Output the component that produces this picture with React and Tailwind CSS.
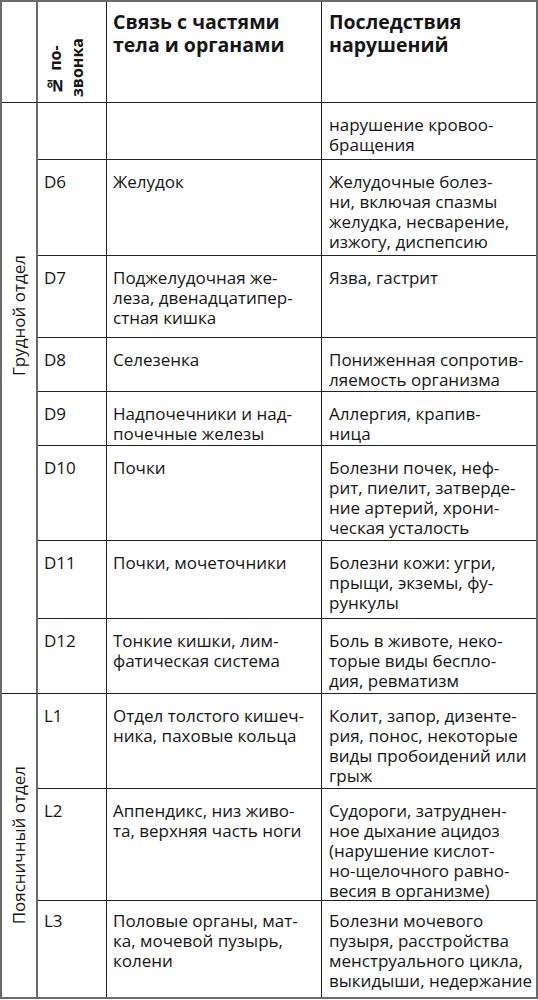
import React from "react";

const rows = [
  { h: "h-[57px]", num: "", organ: [], effect: ["нарушение кровоо-", "бращения"] },
  { h: "h-[96px]", num: "D6", organ: ["Желудок"], effect: ["Желудочные болез-", "ни, включая спазмы", "желудка, несварение,", "изжогу, диспепсию"] },
  { h: "h-[82px]", num: "D7", organ: ["Поджелудочная же-", "леза, двенадцатипер-", "стная кишка"], effect: ["Язва, гастрит"] },
  { h: "h-[54px]", num: "D8", organ: ["Селезенка"], effect: ["Пониженная сопротив-", "ляемость организма"] },
  { h: "h-[54px]", num: "D9", organ: ["Надпочечники и над-", "почечные железы"], effect: ["Аллергия, крапив-", "ница"] },
  { h: "h-[95px]", num: "D10", organ: ["Почки"], effect: ["Болезни почек, неф-", "рит, пиелит, затверде-", "ние артерий, хрони-", "ческая усталость"] },
  { h: "h-[78px]", num: "D11", organ: ["Почки, мочеточники"], effect: ["Болезни кожи: угри,", "прыщи, экземы, фу-", "рункулы"] },
  { h: "h-[75px]", num: "D12", organ: ["Тонкие кишки, лим-", "фатическая система"], effect: ["Боль в животе, неко-", "торые виды беспло-", "дия, ревматизм"] },
  { h: "h-[95px]", num: "L1", organ: ["Отдел толстого кишеч-", "ника, паховые кольца"], effect: ["Колит, запор, дизенте-", "рия, понос, некоторые", "виды пробоидений или", "грыж"] },
  { h: "h-[112px]", num: "L2", organ: ["Аппендикс, низ живо-", "та, верхняя часть ноги"], effect: ["Судороги, затруднен-", "ное дыхание ацидоз", "(нарушение кислот-", "но-щелочного равно-", "весия в организме)"] },
  { h: "h-[96px]", num: "L3", organ: ["Половые органы, мат-", "ка, мочевой пузырь,", "колени"], effect: ["Болезни мочевого", "пузыря, расстройства", "менструального цикла,", "выкидыши, недержание"] },
];

const Lines = ({ lines }) => (
  <>
    {lines.map((l, i) => (
      <div key={i}>{l}</div>
    ))}
  </>
);

const App = () => {
  return (
    <div
      className="w-[538px] h-[1000px] bg-white text-[#161616]"
      style={{ fontFamily: '"Open Sans", "Noto Sans", sans-serif' }}
    >
      <div className="grid grid-cols-[36px_69px_215px_1fr] border-2 border-[#6a6a6a] text-[17px] leading-[20px]">
        {/* header */}
        <div className="h-[101px] border-r-2 border-b border-r-[#6a6a6a] border-b-[#222]"></div>
        <div className="h-[101px] border-r border-b border-[#222] flex items-end pl-[6px] pb-[5px]">
          <div className="[writing-mode:vertical-rl] rotate-180 font-bold text-[16px] leading-[22px]">
            <div>№ по-</div>
            <div>звонка</div>
          </div>
        </div>
        <div className="h-[101px] border-r border-b border-[#222] pl-[6px] pt-[8px] font-bold text-[19.5px] leading-[23px]">
          <div>Связь с частями</div>
          <div>тела и органами</div>
        </div>
        <div className="h-[101px] border-b border-[#222] pl-[7px] pt-[8px] font-bold text-[19.5px] leading-[23px]">
          <div>Последствия</div>
          <div>нарушений</div>
        </div>

        {/* section labels */}
        <div className="col-start-1 row-start-2 row-span-8 border-r-2 border-b border-r-[#6a6a6a] border-b-[#222] flex justify-center pt-[152px]">
          <div className="[writing-mode:vertical-rl] rotate-180 h-fit">Грудной отдел</div>
        </div>
        <div className="col-start-1 row-start-10 row-span-3 border-r-2 border-r-[#6a6a6a] flex justify-center items-center">
          <div className="[writing-mode:vertical-rl] rotate-180 h-fit">Поясничный отдел</div>
        </div>

        {rows.map((r, i) => {
          const last = i === rows.length - 1;
          const b = last ? "" : " border-b";
          const pt = last ? " pt-[10px]" : " pt-[12px]";
          return (
            <React.Fragment key={i}>
              <div className={r.h + " border-r border-[#222] pl-[6px]" + pt + b}>{r.num}</div>
              <div className={r.h + " border-r border-[#222] pl-[6px] whitespace-nowrap" + pt + b}>
                <Lines lines={r.organ} />
              </div>
              <div className={r.h + " border-[#222] pl-[7px] whitespace-nowrap" + pt + b}>
                <Lines lines={r.effect} />
              </div>
            </React.Fragment>
          );
        })}
      </div>
    </div>
  );
};

export default App;
